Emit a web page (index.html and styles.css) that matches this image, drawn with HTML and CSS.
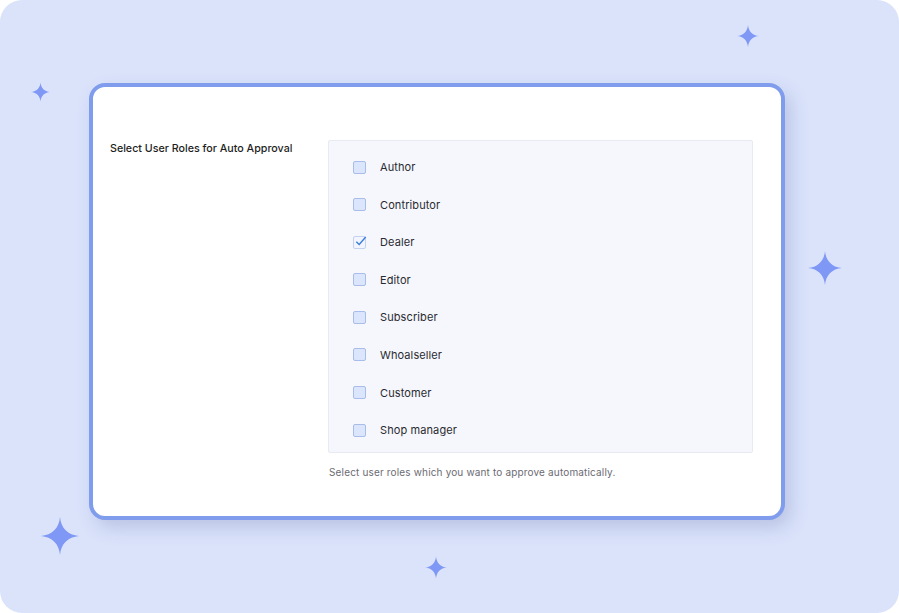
FILE: index.html
```html
<!DOCTYPE html>
<html>
<head>
  <meta charset="utf-8">
  <title>Auto Approval Settings</title>
  <link rel="stylesheet" href="styles.css">
</head>
<body>
<div class="stage">
  <!-- decorative sparkles -->
  <svg class="sparkle s1" viewBox="0 0 24 24"><path d="M12 0C12.6 7 17 11.4 24 12C17 12.6 12.6 17 12 24C11.4 17 7 12.6 0 12C7 11.4 11.4 7 12 0Z"/></svg>
  <svg class="sparkle s2" viewBox="0 0 24 24"><path d="M12 0C12.6 7 17 11.4 24 12C17 12.6 12.6 17 12 24C11.4 17 7 12.6 0 12C7 11.4 11.4 7 12 0Z"/></svg>
  <svg class="sparkle s3" viewBox="0 0 24 24"><path d="M12 0C12.6 7 17 11.4 24 12C17 12.6 12.6 17 12 24C11.4 17 7 12.6 0 12C7 11.4 11.4 7 12 0Z"/></svg>
  <svg class="sparkle s4" viewBox="0 0 24 24"><path d="M12 0C12.6 7 17 11.4 24 12C17 12.6 12.6 17 12 24C11.4 17 7 12.6 0 12C7 11.4 11.4 7 12 0Z"/></svg>
  <svg class="sparkle s5" viewBox="0 0 24 24"><path d="M12 0C12.6 7 17 11.4 24 12C17 12.6 12.6 17 12 24C11.4 17 7 12.6 0 12C7 11.4 11.4 7 12 0Z"/></svg>

  <div class="card">
    <div class="setting-row">
      <div class="setting-label">Select User Roles for Auto Approval</div>
      <div class="setting-field">
        <div class="role-list">
          <label class="role"><span class="box"></span>Author</label>
          <label class="role"><span class="box"></span>Contributor</label>
          <label class="role"><span class="box checked"><svg viewBox="0 0 14 14"><path d="M2.5 7.2L5.6 10.2L12.6 2.2"/></svg></span>Dealer</label>
          <label class="role"><span class="box"></span>Editor</label>
          <label class="role"><span class="box"></span>Subscriber</label>
          <label class="role"><span class="box"></span>Whoalseller</label>
          <label class="role"><span class="box"></span>Customer</label>
          <label class="role"><span class="box"></span>Shop manager</label>
        </div>
        <p class="hint">Select user roles which you want to approve automatically.</p>
      </div>
    </div>
  </div>
</div>
</body>
</html>
```

FILE: styles.css
```css
html, body {
  margin: 0;
  background: #fff;
}

body {
  font-family: "Inter", "Open Sans", sans-serif;
  -webkit-font-smoothing: antialiased;
}

.stage {
  position: relative;
  width: 899px;
  height: 613px;
  background: #dbe3fb;
  border-radius: 22px;
  padding: 83px 0 0 89px;
  box-sizing: border-box;
  overflow: hidden;
}

.sparkle {
  position: absolute;
  fill: #7f98f5;
}
.s1 { left: 31px; top: 82px; width: 19px; height: 20px; }
.s2 { left: 737px; top: 24px; width: 22px; height: 24px; }
.s3 { left: 808px; top: 250px; width: 34px; height: 36px; }
.s4 { left: 41px; top: 515px; width: 38px; height: 42px; }
.s5 { left: 425px; top: 555px; width: 22px; height: 25px; }

.card {
  width: 696px;
  height: 437px;
  box-sizing: border-box;
  background: #fff;
  border: 4px solid #809cec;
  border-radius: 16px;
  box-shadow: 6px 8px 18px rgba(70, 90, 150, 0.22);
  padding: 53px 28px 0 17px;
}

.setting-row {
  display: grid;
  grid-template-columns: 218px 1fr;
}

.setting-label {
  font-size: 10.7px;
  font-weight: 500;
  color: #1d1d22;
  padding-top: 2px;
}

.role-list {
  background: #f5f7fd;
  border: 1px solid #e7eaf3;
  border-radius: 2px;
  padding: 16px 0 12px 24px;
  display: flex;
  flex-direction: column;
  gap: 17.6px;
}

.role {
  display: flex;
  align-items: center;
  height: 20px;
  font-size: 11px;
  letter-spacing: 0.1px;
  color: #2a2a30;
}

.box {
  width: 11px;
  height: 11px;
  margin-right: 14px;
  background: #dbe5fc;
  border: 1px solid #a9bde9;
  border-radius: 2px;
  position: relative;
}

.box.checked {
  background: #f2f5fd;
  border-color: #c4d2ef;
}
.box svg {
  position: absolute;
  left: 0;
  top: -2px;
  width: 13px;
  height: 13px;
  fill: none;
  stroke: #3b7ddc;
  stroke-width: 1.5;
}

.hint {
  margin: 13px 0 0 1px;
  font-size: 10px;
  letter-spacing: 0.16px;
  color: #6b6b72;
}
```
